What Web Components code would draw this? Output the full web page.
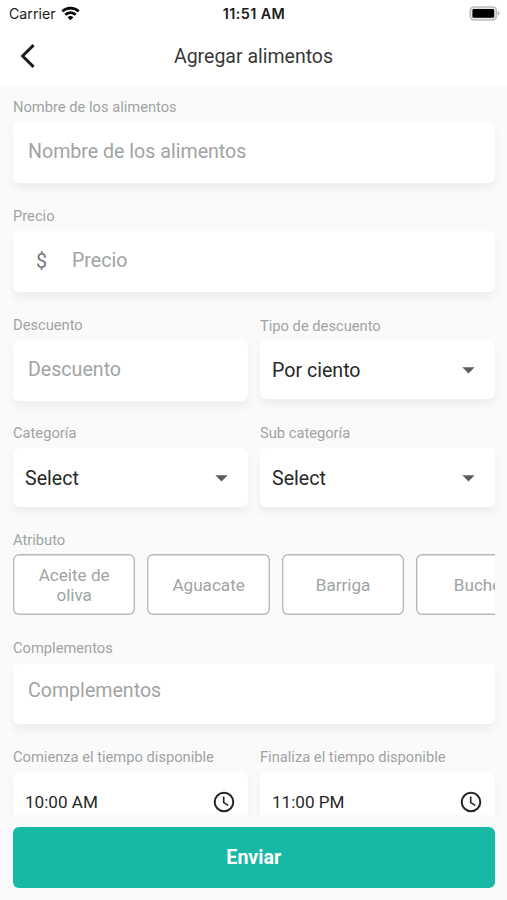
<!DOCTYPE html>
<html lang="es">
<head>
<meta charset="utf-8">
<title>Agregar alimentos</title>
<style>
  html, body { margin: 0; height: 100%; }
  body {
    background: #fafafa;
    color: #282828;
    font-family: Roboto, "Liberation Sans", sans-serif;
    --muted: #a0a4a4;
    --accent: #17b9a6;
    --radius: 6px;
    overflow: hidden;
  }
</style>
</head>
<body>
<food-screen>
  <status-bar slot="top" carrier="Carrier" time="11:51 AM"></status-bar>
  <app-bar slot="top">Agregar alimentos</app-bar>

  <form-field label="Nombre de los alimentos">
    <text-box>Nombre de los alimentos</text-box>
  </form-field>
  <form-field label="Precio">
    <text-box prefix="$">Precio</text-box>
  </form-field>
  <field-row>
    <form-field label="Descuento"><text-box>Descuento</text-box></form-field>
    <form-field label="Tipo de descuento" style="--label-shift: 1px"><select-box>Por ciento</select-box></form-field>
  </field-row>
  <field-row style="margin-top: -1px">
    <form-field label="Categoría"><select-box>Select</select-box></form-field>
    <form-field label="Sub categoría"><select-box>Select</select-box></form-field>
  </field-row>
  <form-field label="Atributo" style="--label-gap: 5px; margin-top: -.3px">
    <chip-list>
      <attribute-chip>Aceite de oliva</attribute-chip>
      <attribute-chip>Aguacate</attribute-chip>
      <attribute-chip>Barriga</attribute-chip>
      <attribute-chip>Buche</attribute-chip>
    </chip-list>
  </form-field>
  <form-field label="Complementos" style="--label-gap: 6.6px; --text-lift: 7px; margin-top: -.3px">
    <text-box>Complementos</text-box>
  </form-field>
  <field-row style="margin-top: -.5px">
    <form-field label="Comienza el tiempo disponible"><time-box>10:00 AM</time-box></form-field>
    <form-field label="Finaliza el tiempo disponible"><time-box>11:00 PM</time-box></form-field>
  </field-row>

  <submit-button slot="bottom">Enviar</submit-button>
</food-screen>

<script>
/** Base class: puts the static `markup` of the subclass in an open shadow root. */
class BaseElement extends HTMLElement {
  constructor() {
    super();
    this.attachShadow({mode: 'open'});
    this.shadowRoot.innerHTML = this.constructor.markup;
  }

  $(selector) { return this.shadowRoot.querySelector(selector); }
}

class FoodScreen extends BaseElement {
  static markup = `
    <style>
      :host { display: flex; flex-direction: column; height: 900px; }
      header { background: #fff; flex: none; }
      main {
        flex: 1;
        min-height: 0;
        overflow: hidden;
        display: flex;
        flex-direction: column;
        gap: 24.3px;
        padding: 12px 12.5px 0 13px;
      }
      footer { flex: none; padding: 12px 12.5px 12px 13px; }
    </style>
    <header><slot name="top"></slot></header>
    <main><slot></slot></main>
    <footer><slot name="bottom"></slot></footer>
  `;
}

class StatusBar extends BaseElement {
  static markup = `
    <style>
      :host {
        display: grid;
        grid-template-columns: 1fr auto 1fr;
        align-items: center;
        height: 27px;
        padding: 0 7px 0 9px;
        font-family: Inter, "Liberation Sans", sans-serif;
        font-size: 14.2px;
        color: #1b1b1b;
      }
      .left { display: flex; align-items: center; gap: 5px; }
      .time { font-weight: 600; font-size: 14.4px; letter-spacing: .38px; margin-right: 1px; }
      .battery { justify-self: end; }
      svg { display: block; }
    </style>
    <div class="left">
      <span class="carrier"></span>
      <svg width="19" height="15" viewBox="0 0 19 15" fill="none" stroke="#000" stroke-width="2.7">
        <path d="M1.3 5.4a11.8 11.8 0 0 1 16.4 0"/>
        <path d="M4.3 8.8a7.4 7.4 0 0 1 10.4 0"/>
        <path d="M9.5 14.3 6.6 11.3a4.2 4.2 0 0 1 5.8 0Z" fill="#000" stroke="none"/>
      </svg>
    </div>
    <span class="time"></span>
    <svg class="battery" width="31" height="15" viewBox="0 0 31 15">
      <rect x="1.2" y=".9" width="26.2" height="13" rx="3.6" fill="#e6e6e6" stroke="#bdbdbd" stroke-width="1.5"/>
      <rect x="3.4" y="3" width="21.8" height="8.8" rx="1.4" fill="#000"/>
      <path d="M28.8 5v4.6q1.6-.8 1.6-2.3T28.8 5Z" fill="#aaa"/>
    </svg>
  `;

  connectedCallback() {
    this.$('.carrier').textContent = this.getAttribute('carrier');
    this.$('.time').textContent = this.getAttribute('time');
  }
}

class AppBar extends BaseElement {
  static markup = `
    <style>
      :host {
        display: grid;
        grid-template-columns: 36px 1fr 36px;
        align-items: center;
        height: 59px;
        padding: 0 10px;
        font-size: 19.5px;
        text-align: center;
        color: #383838;
      }
      svg { display: block; margin: -1px 0 0 9px; }
    </style>
    <svg width="18" height="24" viewBox="0 0 18 24" fill="none" stroke="#1c1c1c" stroke-width="2.9">
      <path d="M14.6 1.1 3.6 12l11 10.9"/>
    </svg>
    <span><slot></slot></span>
  `;
}

class FormField extends BaseElement {
  static markup = `
    <style>
      :host { display: block; min-width: 0; }
      label {
        display: block;
        height: 18px;
        line-height: 18px;
        margin-bottom: var(--label-gap, 6.2px);
        font-size: 14.7px;
        color: var(--muted);
        white-space: nowrap;
      }
      label span { display: block; transform: translateY(var(--label-shift, 0)); }
    </style>
    <label><span></span></label>
    <slot></slot>
  `;

  connectedCallback() {
    this.$('label span').textContent = this.getAttribute('label');
  }
}

class FieldRow extends BaseElement {
  static markup = `
    <style>
      :host { display: grid; grid-template-columns: 1fr 1fr; gap: 12.5px; }
    </style>
    <slot></slot>
  `;
}

const boxStyle = `
  :host {
    display: flex;
    align-items: center;
    box-sizing: border-box;
    background: #fff;
    border-radius: var(--radius);
    box-shadow: 0 6px 8px rgba(0, 0, 0, .05);
    font-size: 19.6px;
  }
`;

class TextBox extends BaseElement {
  static markup = `
    <style>
      ${boxStyle}
      :host { height: 60.5px; padding: 0 15px var(--text-lift, 2px); color: var(--muted); }
      .prefix { width: 44px; padding-left: 8px; box-sizing: border-box; color: #777; padding-top: 2px; }
      .prefix:empty { display: none; }
    </style>
    <span class="prefix"></span>
    <slot></slot>
  `;

  connectedCallback() {
    this.$('.prefix').textContent = this.getAttribute('prefix') || '';
  }
}

class SelectBox extends BaseElement {
  static markup = `
    <style>
      ${boxStyle}
      :host { height: 59px; padding: 1.4px 20px 0 12px; justify-content: space-between; }
    </style>
    <slot></slot>
    <svg width="13" height="7" viewBox="0 0 13 7"><path d="M.4.3h12.2L6.5 6.5Z" fill="#5c5c5c"/></svg>
  `;
}

class TimeBox extends BaseElement {
  static markup = `
    <style>
      ${boxStyle}
      :host { height: 61px; padding: 0 13px 1px 12px; justify-content: space-between; font-size: 17.1px; }
    </style>
    <slot></slot>
    <svg width="22" height="22" viewBox="0 0 22 22" fill="none" stroke="#252525">
      <circle cx="11" cy="11" r="9.3" stroke-width="2"/>
      <path d="M10.7 5.6v6l4.6 2.8" stroke-width="1.6"/>
    </svg>
  `;
}

class ChipList extends BaseElement {
  static markup = `
    <style>
      :host { display: flex; gap: 12.2px; overflow: hidden; }
    </style>
    <slot></slot>
  `;
}

class AttributeChip extends BaseElement {
  static markup = `
    <style>
      :host {
        flex: none;
        display: flex;
        align-items: center;
        justify-content: center;
        box-sizing: border-box;
        width: 122.3px;
        height: 61px;
        padding: 1px 12px 0;
        background: #fff;
        box-shadow: inset 0 0 0 1.4px #b8baba;
        border-radius: var(--radius);
        color: var(--muted);
        font-size: 17.1px;
        line-height: 20px;
        text-align: center;
      }
    </style>
    <span><slot></slot></span>
  `;
}

class SubmitButton extends BaseElement {
  static markup = `
    <style>
      :host {
        display: flex;
        align-items: center;
        justify-content: center;
        height: 61px;
        background: var(--accent);
        border-radius: var(--radius);
        color: #fff;
        font-size: 19.6px;
        font-weight: 700;
      }
    </style>
    <slot></slot>
  `;
}

customElements.define('food-screen', FoodScreen);
customElements.define('status-bar', StatusBar);
customElements.define('app-bar', AppBar);
customElements.define('form-field', FormField);
customElements.define('field-row', FieldRow);
customElements.define('text-box', TextBox);
customElements.define('select-box', SelectBox);
customElements.define('time-box', TimeBox);
customElements.define('chip-list', ChipList);
customElements.define('attribute-chip', AttributeChip);
customElements.define('submit-button', SubmitButton);
</script>
</body>
</html>
